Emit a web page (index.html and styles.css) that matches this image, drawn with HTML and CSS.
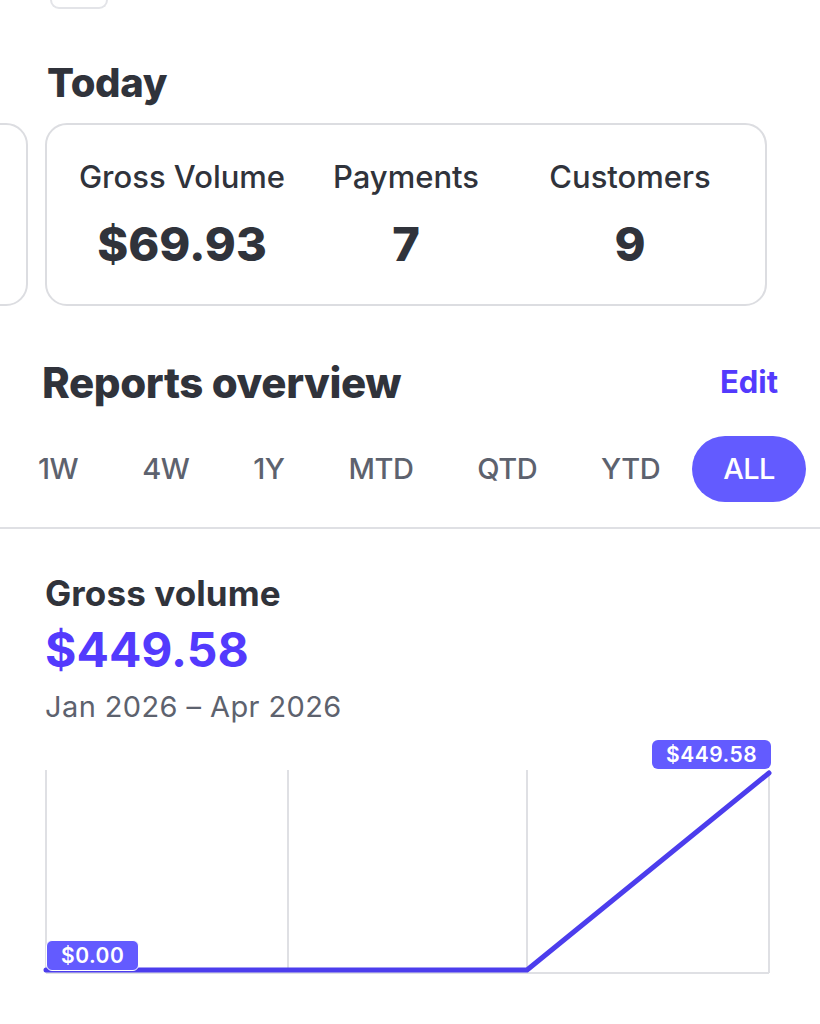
FILE: index.html
```html
<!DOCTYPE html>
<html lang="en">
<head>
<meta charset="UTF-8"><meta name="viewport" content="width=device-width,initial-scale=1.0">
<title>Dashboard • Home</title>
<link rel="stylesheet" href="styles.css">
</head>
<body>
<div class="stub"></div>

<h1 class="today">Today</h1>

<div class="cards">
  <div class="card ghost"></div>
  <div class="card stats">
    <div class="stat"><p class="lbl">Gross Volume</p><p class="val">$69.93</p></div>
    <div class="stat"><p class="lbl">Payments</p><p class="val">7</p></div>
    <div class="stat"><p class="lbl">Customers</p><p class="val">9</p></div>
  </div>
</div>

<div class="rhead">
  <h2>Reports overview</h2>
  <a class="edit">Edit</a>
</div>

<div class="tabs">
  <span class="tab">1W</span>
  <span class="tab">4W</span>
  <span class="tab">1Y</span>
  <span class="tab">MTD</span>
  <span class="tab">QTD</span>
  <span class="tab">YTD</span>
  <span class="tab on">ALL</span>
</div>

<div class="report">
  <h3>Gross volume</h3>
  <p class="total">$449.58</p>
  <p class="range">Jan 2026 – Apr 2026</p>
</div>

<div class="chart">
  <svg width="820" height="250" viewBox="0 0 820 250">
    <g stroke="#dfe0e4" stroke-width="2">
      <line x1="46" y1="35" x2="46" y2="238"/>
      <line x1="288" y1="35" x2="288" y2="238"/>
      <line x1="527" y1="35" x2="527" y2="238"/>
      <line x1="769" y1="35" x2="769" y2="238"/>
      <line x1="46" y1="238" x2="769" y2="238"/>
    </g>
    <polyline points="46,235 527,235 769,38" fill="none" stroke="#4c3ded" stroke-width="5" stroke-linejoin="round" stroke-linecap="round"/>
  </svg>
  <span class="tip lo">$0.00</span>
  <span class="tip hi">$449.58</span>
</div>
</body>
</html>
```

FILE: styles.css
```css
:root{--ink:#30333b;--muted:#5d626e;--line:#dfe0e4;--brand:#533afd;--pill:#635bff}
*{box-sizing:border-box}
body{margin:0;font-family:Inter,'Noto Sans',sans-serif;background:#fff;color:var(--ink);width:820px;overflow:hidden}
p,h1,h2,h3{margin:0}

.stub{margin-left:50px;width:58px;height:9px;border:2px solid #e3e4e8;border-top:none;border-radius:0 0 10px 10px}

.today{font-size:40px;font-weight:800;line-height:48px;margin:50px 0 0 47px;letter-spacing:-.3px}

.cards{display:flex;gap:17px;margin-top:16px}
.card{border:2px solid #dcdde1;border-radius:22px;height:183px;flex:none}
.ghost{width:200px;margin-left:-172px}
.stats{width:722px;display:grid;grid-template-columns:repeat(3,1fr);padding:0 23px}
.stat{text-align:center;padding-top:34px;white-space:nowrap}
.lbl{font-size:31px;line-height:36px;font-weight:500}
.val{font-size:47px;line-height:56px;font-weight:800;margin-top:21px}

.rhead{display:flex;justify-content:space-between;align-items:center;margin:52px 42px 0 42px;height:50px}
.rhead h2{font-size:42px;font-weight:800;line-height:50px;letter-spacing:-.4px}
.edit{color:var(--brand);font-size:31px;font-weight:700;margin-top:-4px}

.tabs{display:flex;align-items:center;margin:28px 0 0 6px;height:66px}
.tab{padding:0 32px;font-size:29px;font-weight:500;color:var(--muted);line-height:66px;white-space:nowrap;letter-spacing:-.5px}
.tab.on{background:var(--pill);color:#fff;border-radius:33px;padding:0 31px}

.report{border-top:2px solid var(--line);margin-top:25px;padding:43px 0 0 45px}
.report h3{font-size:35px;font-weight:700;line-height:42px;letter-spacing:.1px}
.total{font-size:48px;font-weight:700;color:var(--brand);line-height:56px;margin-top:8px}
.range{font-size:29px;color:var(--muted);line-height:34px;margin-top:12px;letter-spacing:.4px}

.chart{position:relative;margin-top:11px;height:250px}
.chart svg{display:block}
.tip{position:absolute;background:var(--pill);color:#fff;font-size:21px;font-weight:600;line-height:29px;border-radius:6px;padding:0 16px;letter-spacing:.5px}
.tip.lo{left:46px;top:205px;border:1.5px solid #fff;padding:0 14px}
.tip.hi{left:652px;top:5px;padding:0 14px}
```
